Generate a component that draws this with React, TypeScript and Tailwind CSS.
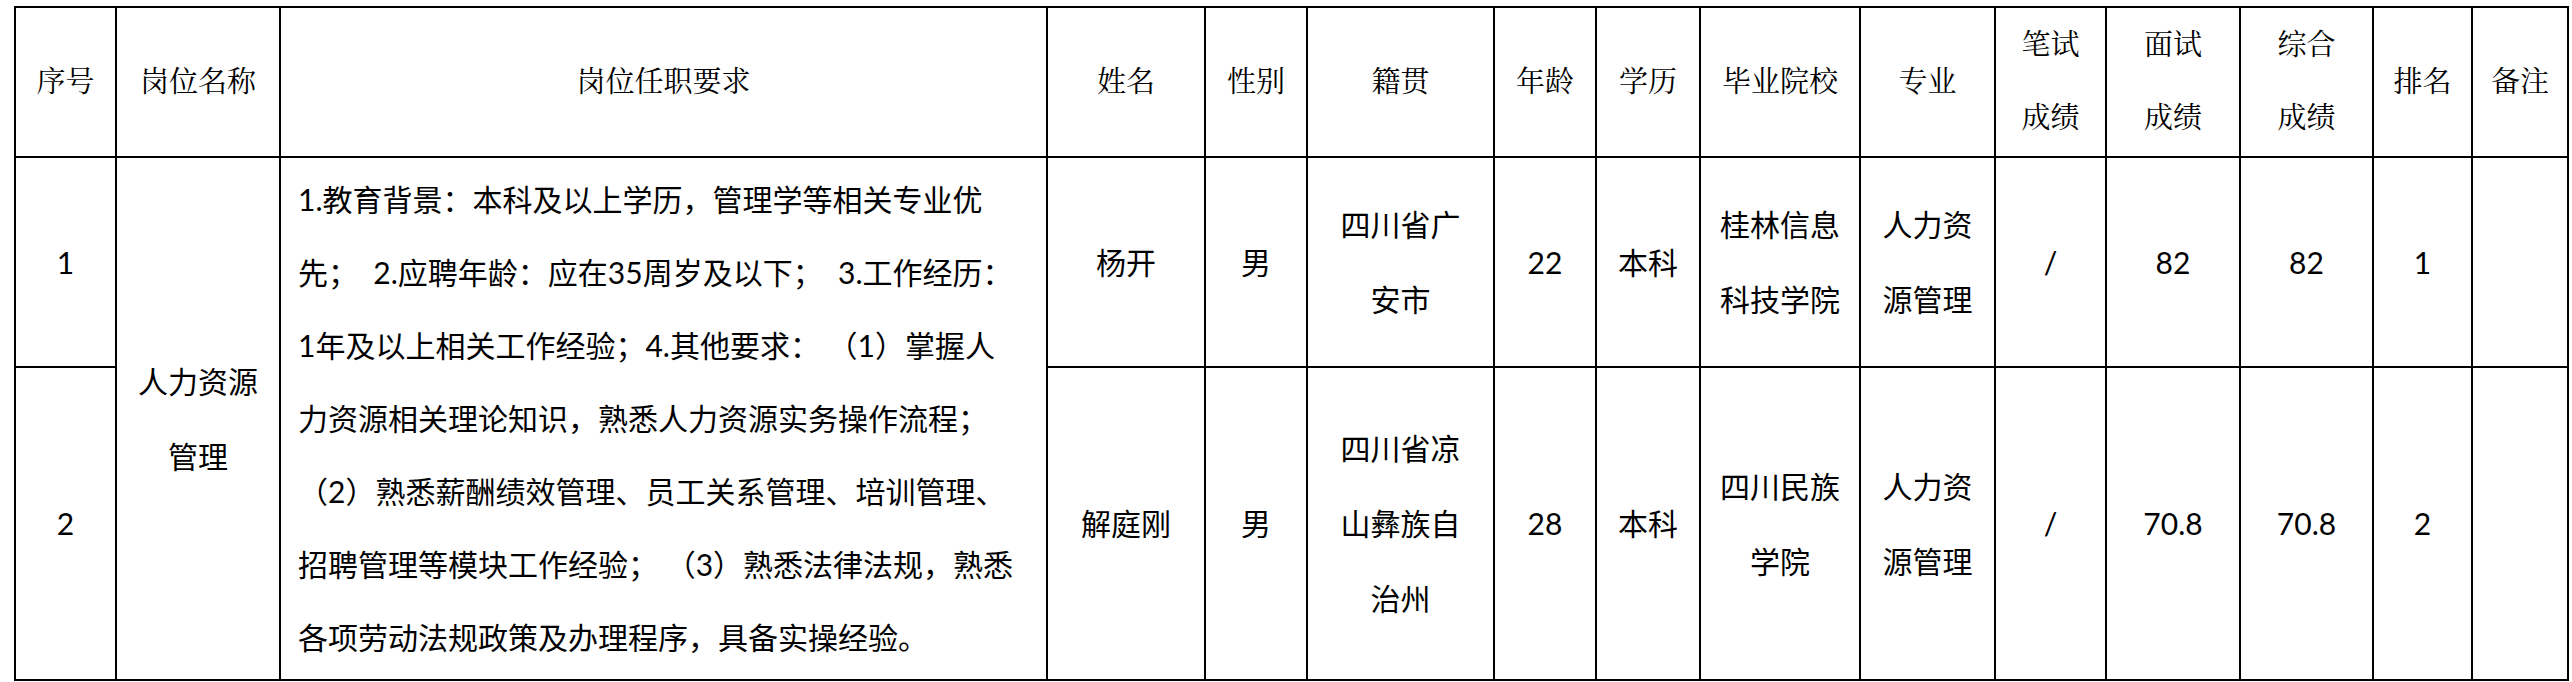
const HEAD = "font-['Liberation_Serif','Noto_Serif_CJK_SC','Noto_Sans_CJK_SC',serif] text-[29px] leading-[73px] font-normal text-black text-center align-middle border-2 border-black p-0";
const CELL = "font-['Lato','Noto_Sans_CJK_SC',sans-serif] text-[30px] leading-[75px] text-black text-center align-middle border-2 border-black p-0";

const COLS = [101, 164, 767, 158, 102, 187, 102, 104, 160, 135, 111, 134, 133, 99, 96];

const REQUIREMENTS = [
  "1.教育背景：本科及以上学历，管理学等相关专业优",
  "先；  2.应聘年龄：应在35周岁及以下；  3.工作经历：",
  "1年及以上相关工作经验；4.其他要求： （1）掌握人",
  "力资源相关理论知识，熟悉人力资源实务操作流程；",
  "（2）熟悉薪酬绩效管理、员工关系管理、培训管理、",
  "招聘管理等模块工作经验； （3）熟悉法律法规，熟悉",
  "各项劳动法规政策及办理程序，具备实操经验。",
];

interface Candidate {
  no: string;
  name: string;
  gender: string;
  origin: string[];
  age: string;
  edu: string;
  school: string[];
  major: string[];
  written: string;
  interview: string;
  total: string;
  rank: string;
}

const CANDIDATES: Candidate[] = [
  {
    no: "1",
    name: "杨开",
    gender: "男",
    origin: ["四川省广", "安市"],
    age: "22",
    edu: "本科",
    school: ["桂林信息", "科技学院"],
    major: ["人力资", "源管理"],
    written: "/",
    interview: "82",
    total: "82",
    rank: "1",
  },
  {
    no: "2",
    name: "解庭刚",
    gender: "男",
    origin: ["四川省凉", "山彝族自", "治州"],
    age: "28",
    edu: "本科",
    school: ["四川民族", "学院"],
    major: ["人力资", "源管理"],
    written: "/",
    interview: "70.8",
    total: "70.8",
    rank: "2",
  },
];

function Lines({ lines }: { lines: string[] }) {
  return (
    <>
      {lines.map((l, i) => (
        <div key={i}>{l}</div>
      ))}
    </>
  );
}

export default function App() {
  return (
    <div className="w-[2572px] h-[682px] bg-white overflow-hidden pt-[6px] pl-[14px]">
      <table className="table-fixed border-collapse w-[2555px]">
        <colgroup>
          {COLS.map((w, i) => (
            <col key={i} style={{ width: w }} />
          ))}
        </colgroup>
        <thead>
          <tr className="h-[150px]">
            <th className={HEAD}>序号</th>
            <th className={HEAD}>岗位名称</th>
            <th className={HEAD}>岗位任职要求</th>
            <th className={HEAD}>姓名</th>
            <th className={HEAD}>性别</th>
            <th className={HEAD}>籍贯</th>
            <th className={HEAD}>年龄</th>
            <th className={HEAD}>学历</th>
            <th className={HEAD}>毕业院校</th>
            <th className={HEAD}>专业</th>
            <th className={HEAD}>
              <div>笔试</div>
              <div>成绩</div>
            </th>
            <th className={HEAD}>
              <div>面试</div>
              <div>成绩</div>
            </th>
            <th className={HEAD}>
              <div>综合</div>
              <div>成绩</div>
            </th>
            <th className={HEAD}>排名</th>
            <th className={HEAD}>备注</th>
          </tr>
        </thead>
        <tbody>
          {CANDIDATES.map((c, i) => (
            <tr key={c.no} className={i === 0 ? "h-[210px]" : "h-[313px]"}>
              <td className={CELL}>{c.no}</td>
              {i === 0 && (
                <>
                  <td rowSpan={2} className={CELL}>
                    <div>人力资源</div>
                    <div>管理</div>
                  </td>
                  <td rowSpan={2} className={`${CELL} !text-left !leading-[73px] pl-[17px] whitespace-pre`}>
                    <Lines lines={REQUIREMENTS} />
                  </td>
                </>
              )}
              <td className={CELL}>{c.name}</td>
              <td className={CELL}>{c.gender}</td>
              <td className={CELL}>
                <Lines lines={c.origin} />
              </td>
              <td className={CELL}>{c.age}</td>
              <td className={CELL}>{c.edu}</td>
              <td className={CELL}>
                <Lines lines={c.school} />
              </td>
              <td className={CELL}>
                <Lines lines={c.major} />
              </td>
              <td className={CELL}>{c.written}</td>
              <td className={CELL}>{c.interview}</td>
              <td className={CELL}>{c.total}</td>
              <td className={CELL}>{c.rank}</td>
              <td className={CELL}></td>
            </tr>
          ))}
        </tbody>
      </table>
    </div>
  );
}
